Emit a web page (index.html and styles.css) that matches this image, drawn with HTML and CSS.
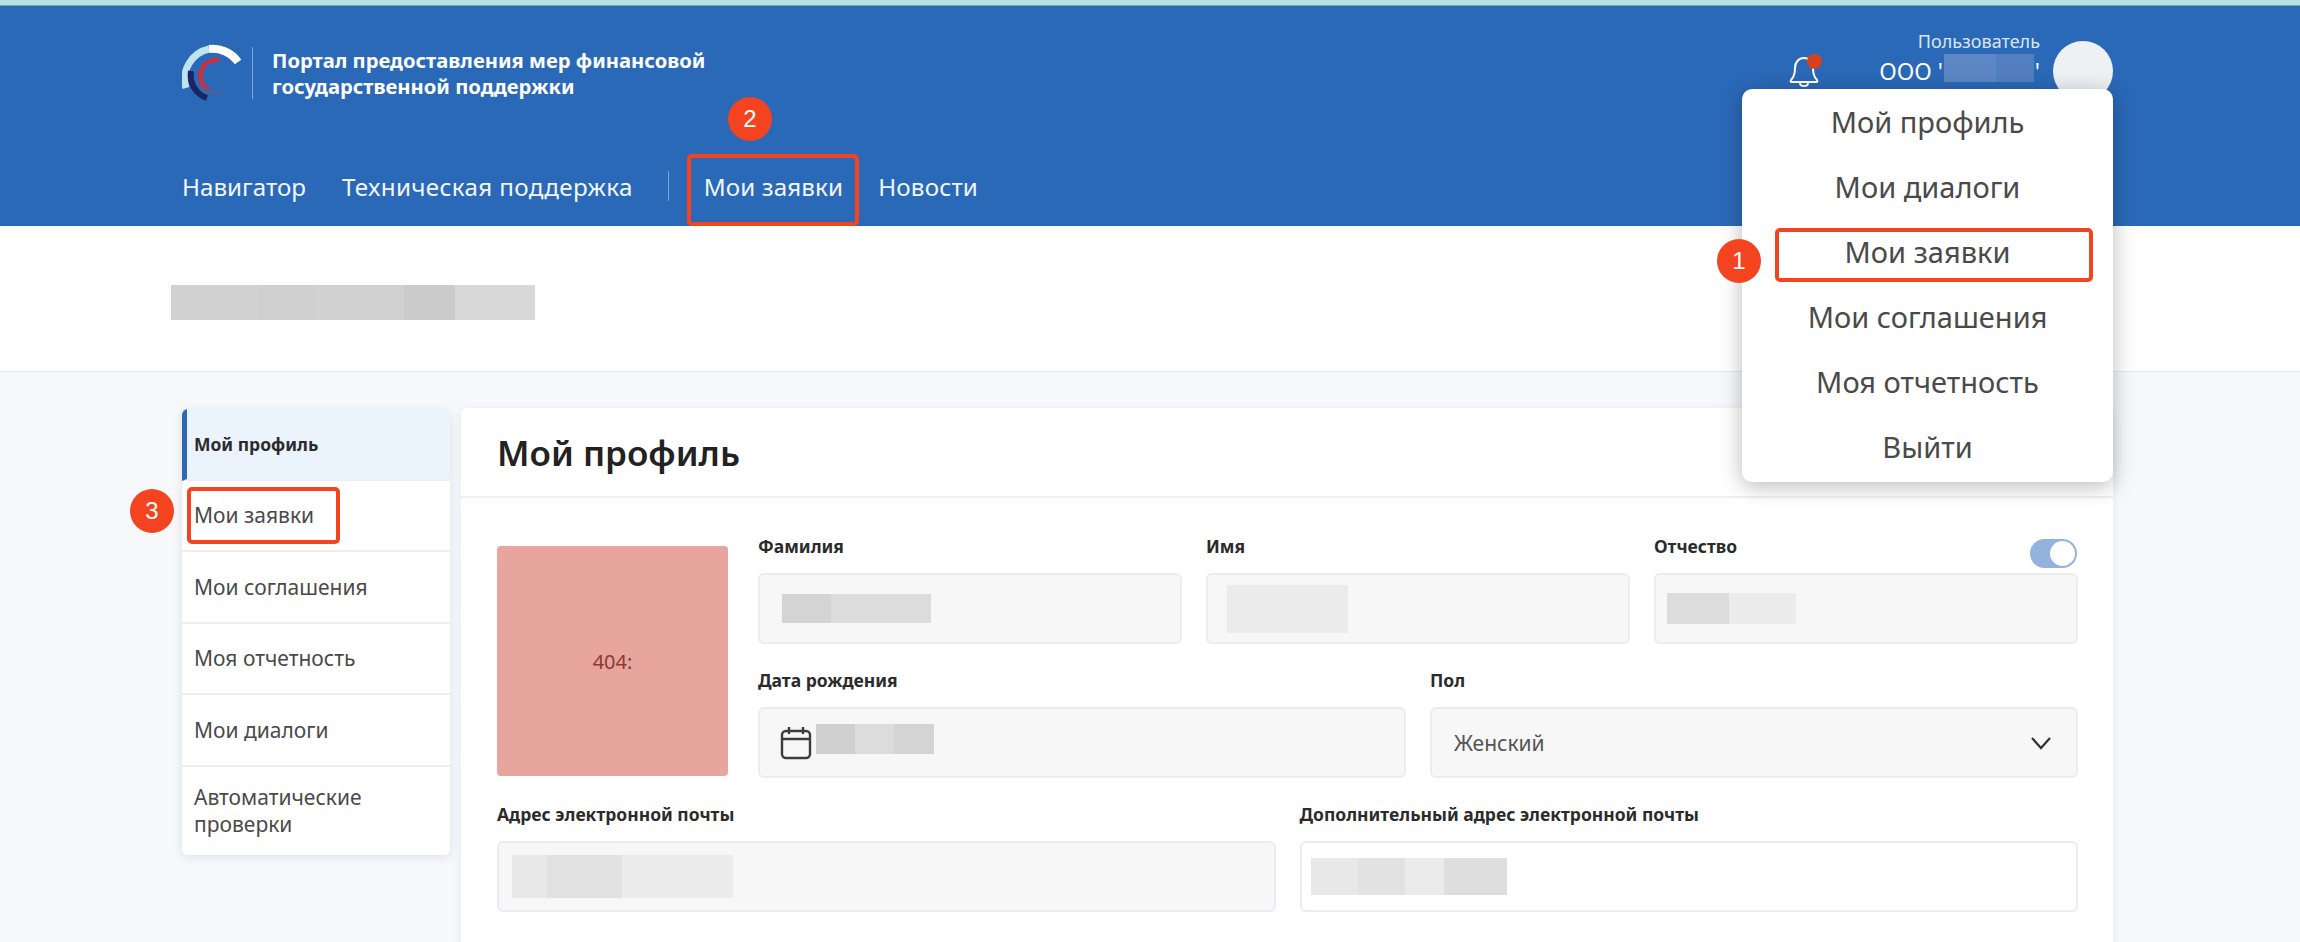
FILE: index.html
```html
<!DOCTYPE html>
<html lang="ru">
<head>
    <meta charset="UTF-8">
    <meta name="viewport" content="width=device-width, initial-scale=1.0">
    <title>Мой профиль</title>
    <link rel="stylesheet" href="styles.css">
</head>
<body>
    <div class="top-strip"></div>

    <header class="site-header">
        <div class="header-top">
            <div class="brand">
                <svg class="logo" width="60" height="60" viewBox="0 0 60 60" fill="none">
                    <path d="M4 44 A31 31 0 0 1 27 5" stroke="#bfe3f1" stroke-width="7"/>
                    <path d="M27 5 A31 31 0 0 1 56 18" stroke="#ffffff" stroke-width="8"/>
                    <path d="M9 27 A24 24 0 0 0 25 54" stroke="#1b2566" stroke-width="6"/>
                    <path d="M37 16 A16 16 0 0 0 27 46" stroke="#c9303a" stroke-width="4.5"/>
                    <path d="M18 42 A20 20 0 0 0 41 48" stroke="#4b629f" stroke-width="3"/>
                </svg>
                <div class="brand-name">Портал предоставления мер финансовой<br>государственной поддержки</div>
            </div>
            <div class="user-area">
                <svg class="bell" width="34" height="34" viewBox="0 0 34 34" fill="none" stroke="#fff" stroke-width="2">
                    <path d="M4 26 C8 22 8 18 8 14 C8 8 12 4 17 4 C22 4 26 8 26 14 C26 18 26 22 30 26 C31 28 30 28 29 28 L5 28 C4 28 3 28 4 26 Z"/>
                    <path d="M13 29 C13 33 21 33 21 29"/>
                </svg>
                <span class="bell-dot"></span>
                <div class="user-info">
                    <div class="user-role">Пользователь</div>
                    <div class="user-name">ООО '<span class="smudge smudge-user"></span>'</div>
                </div>
                <div class="avatar"></div>
            </div>
        </div>
        <nav class="main-nav">
            <a class="nav-navigator">Навигатор</a>
            <a class="nav-support">Техническая поддержка</a>
            <span class="nav-divider"></span>
            <a class="nav-orders">Мои заявки</a>
            <a class="nav-news">Новости</a>
        </nav>
    </header>

    <section class="title-band">
        <div class="smudge smudge-title"></div>
    </section>

    <div class="content">
        <aside class="side-menu">
            <div class="side-item active">Мой профиль</div>
            <div class="side-item">Мои заявки</div>
            <div class="side-item">Мои соглашения</div>
            <div class="side-item">Моя отчетность</div>
            <div class="side-item">Мои диалоги</div>
            <div class="side-item last">Автоматические проверки</div>
        </aside>

        <main class="profile-card">
            <div class="card-head"><h1>Мой профиль</h1></div>
            <div class="card-body">
                <div class="form-top">
                    <div class="photo">404:</div>
                    <div class="form-rows">
                        <div class="row row-three">
                            <div>
                                <div class="label-row"><label>Фамилия</label></div>
                                <div class="field"><span class="smudge smudge-surname"></span></div>
                            </div>
                            <div>
                                <div class="label-row"><label>Имя</label></div>
                                <div class="field field-name"><span class="smudge smudge-name"></span></div>
                            </div>
                            <div>
                                <div class="label-row"><label>Отчество</label><span class="toggle"></span></div>
                                <div class="field field-tight"><span class="smudge smudge-middle"></span></div>
                            </div>
                        </div>
                        <div class="row row-two">
                            <div>
                                <div class="label-row"><label>Дата рождения</label></div>
                                <div class="field field-date">
                                    <svg width="32" height="34" viewBox="0 0 32 34" fill="none" stroke="#3c3c3c" stroke-width="2.4">
                                        <rect x="2" y="5" width="28" height="27" rx="4"/>
                                        <path d="M2 13 H30 M9 1 V8 M23 1 V8"/>
                                    </svg>
                                    <span class="smudge smudge-date"></span>
                                </div>
                            </div>
                            <div>
                                <div class="label-row"><label>Пол</label></div>
                                <div class="field field-select">
                                    <span>Женский</span>
                                    <svg width="22" height="14" viewBox="0 0 22 14" fill="none" stroke="#333" stroke-width="2.2">
                                        <path d="M2 2 L11 12 L20 2"/>
                                    </svg>
                                </div>
                            </div>
                        </div>
                    </div>
                </div>
                <div class="row row-two">
                    <div>
                        <div class="label-row"><label>Адрес электронной почты</label></div>
                        <div class="field field-email"><span class="smudge smudge-email"></span></div>
                    </div>
                    <div>
                        <div class="label-row"><label>Дополнительный адрес электронной почты</label></div>
                        <div class="field field-email field-white"><span class="smudge smudge-email2"></span></div>
                    </div>
                </div>
            </div>
        </main>
    </div>

    <div class="user-menu">
        <div class="user-menu-item">Мой профиль</div>
        <div class="user-menu-item">Мои диалоги</div>
        <div class="user-menu-item">Мои заявки</div>
        <div class="user-menu-item">Мои соглашения</div>
        <div class="user-menu-item">Моя отчетность</div>
        <div class="user-menu-item">Выйти</div>
    </div>

    <!-- annotations on top of the screenshot -->
    <div class="mark-box box-menu"></div>
    <div class="mark-box box-nav"></div>
    <div class="mark-box box-side"></div>
    <div class="mark-num num-1">1</div>
    <div class="mark-num num-2">2</div>
    <div class="mark-num num-3">3</div>
</body>
</html>
```

FILE: styles.css
```css
body {
    margin: 0;
    height: 942px;
    overflow: hidden;
    position: relative;
    background-color: #f6f8fa;
    font-family: "Noto Sans", Arial, sans-serif;
    color: #444;
}

.top-strip {
    height: 5px;
    background-color: #b4e0e3;
    border-bottom: 1px solid #7fa3b5;
}

.site-header {
    height: 220px;
    box-sizing: border-box;
    padding: 38px 187px 0 182px;
    background-color: #2a69b8;
    color: #fff;
}
.header-top {
    display: flex;
    justify-content: space-between;
    height: 60px;
}
.brand {
    display: flex;
    align-items: flex-start;
}
.logo {
    flex-shrink: 0;
}
.brand-name {
    margin-left: 10px;
    margin-top: 3px;
    padding-left: 19px;
    border-left: 1px solid rgba(255, 255, 255, 0.4);
    font-size: 20.2px;
    font-weight: 700;
    line-height: 26px;
}
.user-area {
    position: relative;
    display: flex;
    align-items: flex-start;
}
.bell {
    margin-top: 10px;
    margin-right: 58px;
}
.bell-dot {
    position: absolute;
    left: 20px;
    top: 10px;
    width: 15px;
    height: 15px;
    border-radius: 50%;
    background-color: #d8401f;
}
.user-info {
    text-align: right;
    margin-right: 13px;
}
.user-role {
    font-size: 18px;
    line-height: 22px;
    margin-top: -14px;
    color: #dbe6f4;
}
.user-name {
    display: flex;
    align-items: flex-start;
    font-size: 23px;
    line-height: 34px;
    margin-top: 2px;
}
.avatar {
    width: 60px;
    height: 60px;
    margin-top: -3px;
    border-radius: 50%;
    background-color: #eef1f3;
}

.main-nav {
    display: flex;
    align-items: center;
    height: 36px;
    margin-top: 64px;
    font-size: 24.2px;
    color: #f2f6fb;
}
.nav-navigator { margin-right: 36px; }
.nav-support {
    margin-right: 35px;
    letter-spacing: 0.35px;
}
.nav-divider {
    width: 1px;
    height: 30px;
    margin-right: 35px;
    background-color: rgba(255, 255, 255, 0.4);
}
.nav-orders {
    margin-right: 35px;
    letter-spacing: 0.1px;
}
.nav-news {
    letter-spacing: 0.2px;
}

.title-band {
    height: 146px;
    box-sizing: border-box;
    padding: 59px 0 0 171px;
    background-color: #fff;
    border-bottom: 1px solid #e6e8ec;
}

.smudge {
    display: block;
    flex-shrink: 0;
}
.smudge-title {
    width: 364px;
    height: 35px;
    background: linear-gradient(90deg, #d2d2d2 0 24%, #cfcfcf 24% 39%, #d1d1d1 39% 64%, #cbcbcb 64% 78%, #d8d8d8 78% 100%);
}
.smudge-user {
    width: 90px;
    height: 28px;
    margin: 0 1px;
    background: linear-gradient(90deg, #5c87c4 0 58%, #527fbf 58% 100%);
}
.smudge-surname {
    width: 149px;
    height: 29px;
    background: linear-gradient(90deg, #d4d4d4 0 33%, #dcdcdc 33% 100%);
}
.smudge-name {
    width: 121px;
    height: 48px;
    background-color: #ebebeb;
}
.smudge-middle {
    width: 129px;
    height: 31px;
    background: linear-gradient(90deg, #dcdcdc 0 48%, #ececec 48% 100%);
}
.smudge-date {
    width: 118px;
    height: 30px;
    margin-left: 4px;
    margin-bottom: 8px;
    background: linear-gradient(90deg, #cfcfcf 0 33%, #dcdcdc 33% 66%, #d4d4d4 66% 100%);
}
.smudge-email {
    width: 221px;
    height: 43px;
    background: linear-gradient(90deg, #e8e8e8 0 16%, #e1e1e1 16% 50%, #ececec 50% 100%);
}
.smudge-email2 {
    width: 196px;
    height: 37px;
    background: linear-gradient(90deg, #e8e8e8 0 24%, #e2e2e2 24% 48%, #ebebeb 48% 68%, #dedede 68% 100%);
}

.content {
    display: flex;
    align-items: flex-start;
    gap: 11px;
    padding: 36px 0 0 182px;
}

.side-menu {
    width: 268px;
    margin-top: 1px;
    flex-shrink: 0;
    background-color: #fff;
    border-radius: 6px;
    box-shadow: 0 2px 10px rgba(40, 60, 90, 0.12);
    overflow: hidden;
    font-size: 21px;
    color: #4a4a4a;
}
.side-item {
    height: 71.5px;
    box-sizing: border-box;
    display: flex;
    align-items: center;
    padding: 0 12px;
    border-bottom: 2px solid #eceef1;
}
.side-item.active {
    padding-left: 7px;
    border-left: 5px solid #2a69b8;
    background-color: #ebf3fd;
    font-size: 17.5px;
    font-weight: 700;
    color: #2b2b2b;
}
.side-item.last {
    height: 88.5px;
    line-height: 27px;
    border-bottom: none;
}

.profile-card {
    width: 1652px;
    height: 560px;
    flex-shrink: 0;
    background-color: #fff;
    border-radius: 6px;
    box-shadow: 0 2px 10px rgba(40, 60, 90, 0.08);
}
.card-head {
    height: 90px;
    box-sizing: border-box;
    display: flex;
    align-items: center;
    padding-left: 36px;
    border-bottom: 2px solid #eef0f3;
}
.card-head h1 {
    margin: 0;
    font-size: 35px;
    font-weight: 600;
    color: #222;
}
.card-body {
    padding: 36px 35px 0 36px;
}
.form-top {
    display: flex;
    align-items: flex-start;
    gap: 30px;
}
.photo {
    width: 231px;
    height: 230px;
    margin-top: 12px;
    flex-shrink: 0;
    display: flex;
    align-items: center;
    justify-content: center;
    border-radius: 4px;
    background-color: #e8a59e;
    color: #8e3a30;
    font-size: 20px;
}
.form-rows {
    flex-grow: 1;
}
.row {
    display: grid;
    gap: 24px;
    margin-bottom: 24px;
}
.row-three {
    grid-template-columns: 1fr 1fr 1fr;
}
.row-two {
    grid-template-columns: 1fr 1fr;
}
.label-row {
    display: flex;
    justify-content: space-between;
    height: 24px;
    margin-bottom: 15px;
}
label {
    font-size: 17.5px;
    font-weight: 700;
    line-height: 24px;
    color: #2b2b2b;
}
.toggle {
    position: relative;
    width: 47px;
    height: 29px;
    margin-top: 5px;
    margin-right: 1px;
    border-radius: 15px;
    background-color: #93b3de;
}
.toggle::after {
    content: "";
    position: absolute;
    right: 2px;
    top: 2px;
    width: 25px;
    height: 25px;
    border-radius: 50%;
    background-color: #fff;
}
.field {
    height: 71px;
    box-sizing: border-box;
    display: flex;
    align-items: center;
    padding-left: 22px;
    background-color: #f7f7f7;
    border: 2px solid #eaecf0;
    border-radius: 6px;
}
.field-name {
    padding-left: 19px;
}
.field-tight {
    padding-left: 11px;
}
.field-date {
    padding-left: 20px;
}
.field-select {
    justify-content: space-between;
    padding-right: 24px;
    font-size: 21px;
    color: #555;
}
.field-email {
    padding-left: 13px;
}
.field-white {
    padding-left: 9px;
    background-color: #fff;
}

.user-menu {
    position: absolute;
    left: 1742px;
    top: 89px;
    width: 371px;
    height: 393px;
    background-color: #fff;
    border-radius: 10px;
    box-shadow: 0 4px 22px rgba(0, 0, 0, 0.28);
    font-size: 29px;
    color: #4a4a4a;
}
.user-menu-item {
    height: 65px;
    display: flex;
    align-items: center;
    justify-content: center;
}

.mark-box {
    position: absolute;
    box-sizing: border-box;
    border: 4px solid #f4431f;
    border-radius: 5px;
}
.box-menu { left: 1775px; top: 228px; width: 318px; height: 54px; }
.box-nav { left: 687px; top: 154px; width: 172px; height: 72px; }
.box-side { left: 187px; top: 487px; width: 153px; height: 57px; }

.mark-num {
    position: absolute;
    width: 44px;
    height: 44px;
    display: flex;
    align-items: center;
    justify-content: center;
    border-radius: 50%;
    background-color: #f4431f;
    color: #fff;
    font-family: "Liberation Sans", Arial, sans-serif;
    font-size: 24px;
}
.num-1 { left: 1717px; top: 239px; }
.num-2 { left: 728px; top: 97px; }
.num-3 { left: 130px; top: 489px; }
```
